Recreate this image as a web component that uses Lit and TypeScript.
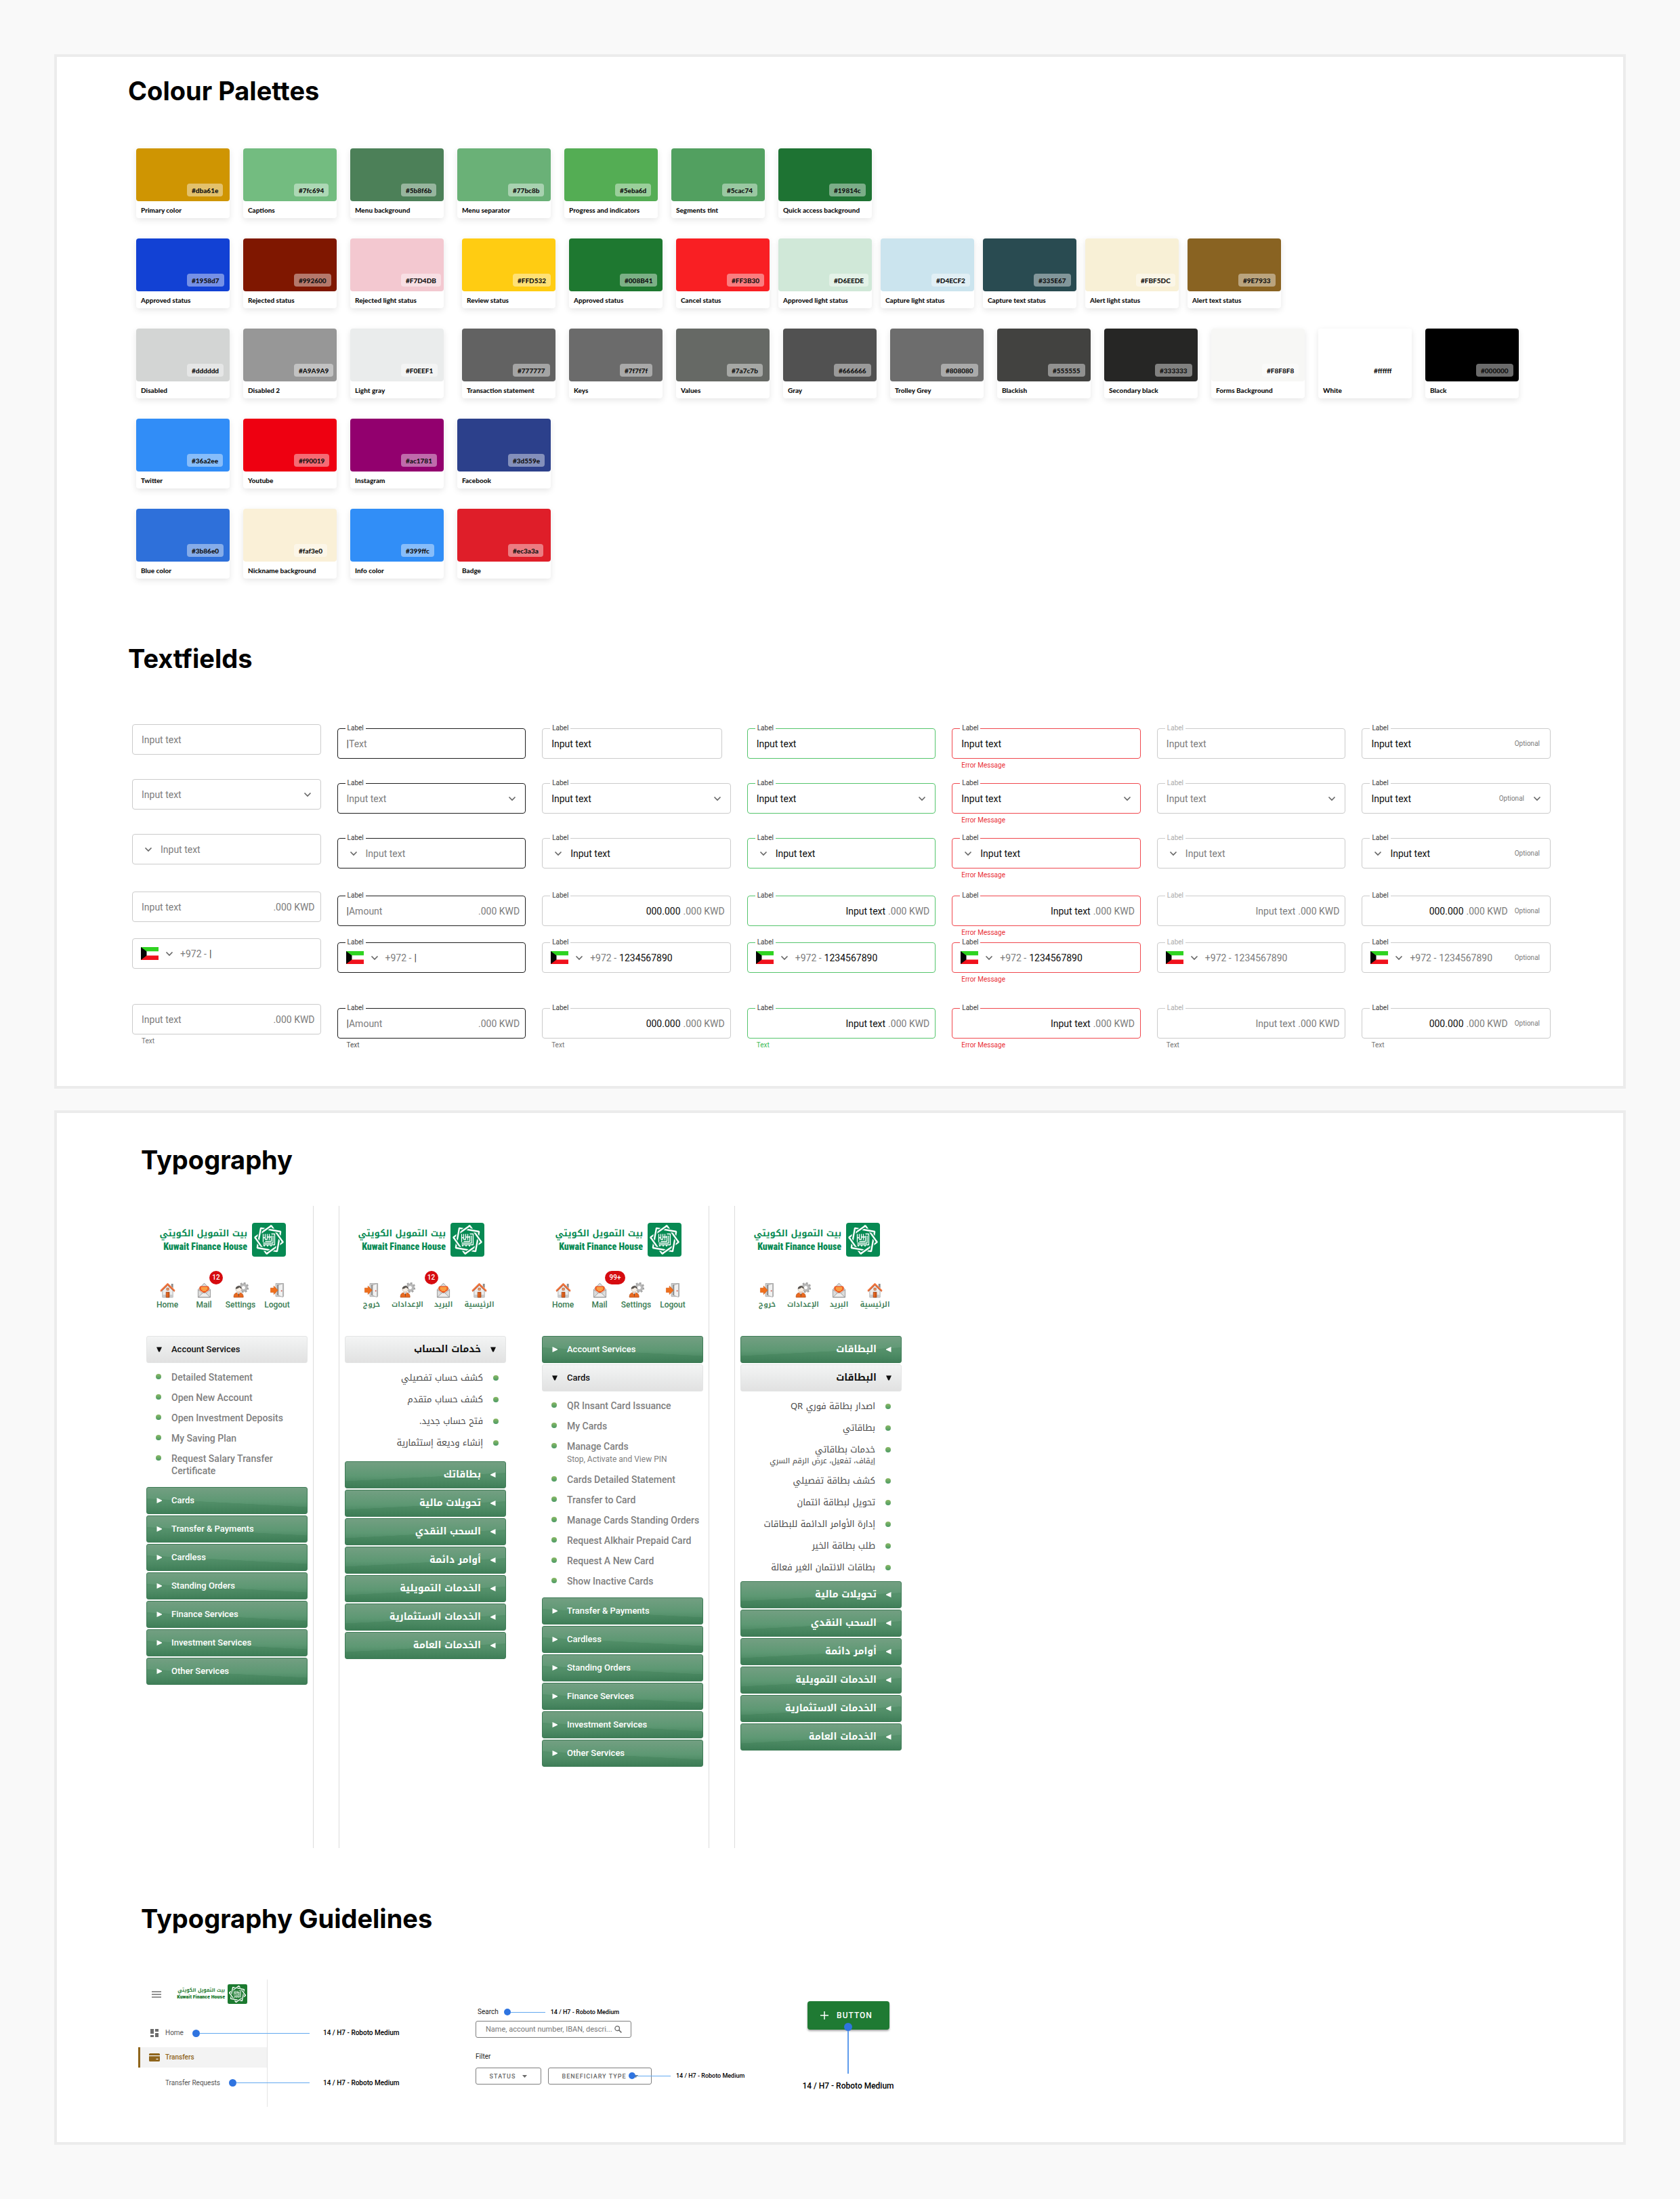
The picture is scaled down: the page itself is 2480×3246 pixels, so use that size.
import { LitElement, html, css, nothing } from "lit";
import { customElement, property } from "lit/decorators.js";
import { classMap } from "lit/directives/class-map.js";

type FieldState = "empty" | "focus" | "filled" | "valid" | "error" | "disabled" | "optional";
type FieldKind = "text" | "select" | "lead" | "amount" | "phone";

interface SwatchData {
  name: string;
  hex: string;
  fill: string;
}

interface MenuEntry {
  title: string;
  items?: { text: string; sub?: string }[];
}

interface MenuData {
  rtl: boolean;
  roomy?: boolean;
  badge?: string;
  entries: MenuEntry[];
}

const s = (name: string, hex: string, fill: string): SwatchData => ({ name, hex, fill });

/* Each row of the palette is a list of groups; the groups are spaced apart. */
const PALETTE: { tight?: boolean; swatches: SwatchData[] }[][] = [
  [
    {
      swatches: [
        s("Primary color", "#dba61e", "#cf9502"),
        s("Captions", "#7fc694", "#73bc80"),
        s("Menu background", "#5b8f6b", "#4c8058"),
        s("Menu separator", "#77bc8b", "#6ab177"),
        s("Progress and indicators", "#5eba6d", "#54ad54"),
        s("Segments tint", "#5cac74", "#52a060"),
        s("Quick access background", "#19814c", "#1e7333"),
      ],
    },
  ],
  [
    {
      swatches: [
        s("Approved status", "#1958d7", "#1241d4"),
        s("Rejected status", "#992600", "#7f1700"),
        s("Rejected light status", "#F7D4DB", "#f3c8d0"),
      ],
    },
    {
      swatches: [
        s("Review status", "#FFD532", "#ffcc12"),
        s("Approved status", "#008B41", "#1e7830"),
        s("Cancel status", "#FF3B30", "#f91f23"),
      ],
    },
    {
      tight: true,
      swatches: [
        s("Approved light status", "#D6EEDE", "#d0e8d8"),
        s("Capture light status", "#D4ECF2", "#cbe4ee"),
        s("Capture text status", "#335E67", "#294b51"),
        s("Alert light status", "#FBF5DC", "#f8f0d6"),
        s("Alert text status", "#9E7933", "#896322"),
      ],
    },
  ],
  [
    {
      swatches: [
        s("Disabled", "#dddddd", "#d3d5d4"),
        s("Disabled 2", "#A9A9A9", "#979797"),
        s("Light gray", "#F0EEF1", "#eaecec"),
      ],
    },
    {
      swatches: [
        s("Transaction statement", "#777777", "#626262"),
        s("Keys", "#7f7f7f", "#6b6b6b"),
        s("Values", "#7a7c7b", "#666965"),
        s("Gray", "#666666", "#515151"),
        s("Trolley Grey", "#808080", "#6d6d6d"),
        s("Blackish", "#555555", "#424240"),
        s("Secondary black", "#333333", "#262625"),
        s("Forms Background", "#F8F8F8", "#f7f7f5"),
        s("White", "#ffffff", "#ffffff"),
        s("Black", "#000000", "#000000"),
      ],
    },
  ],
  [
    {
      swatches: [
        s("Twitter", "#36a2ee", "#318df7"),
        s("Youtube", "#f90019", "#ee0011"),
        s("Instagram", "#ac1781", "#92006e"),
        s("Facebook", "#3d559e", "#2c408b"),
      ],
    },
  ],
  [
    {
      swatches: [
        s("Blue color", "#3b86e0", "#2e70da"),
        s("Nickname background", "#faf3e0", "#faf0d7"),
        s("Info color", "#399ffc", "#318ef7"),
        s("Badge", "#ec3a3a", "#df1e29"),
      ],
    },
  ],
];

const STATES: FieldState[] = ["empty", "focus", "filled", "valid", "error", "disabled", "optional"];

const FIELD_ROWS: { kind: FieldKind; note: boolean; space: string }[] = [
  { kind: "text", note: false, space: "regular" },
  { kind: "select", note: false, space: "regular" },
  { kind: "lead", note: false, space: "wide" },
  { kind: "amount", note: false, space: "none" },
  { kind: "phone", note: false, space: "apart" },
  { kind: "amount", note: true, space: "none" },
];

const MENUS: MenuData[] = [
  {
    rtl: false,
    badge: "12",
    entries: [
      {
        title: "Account Services",
        items: [
          { text: "Detailed Statement" },
          { text: "Open New Account" },
          { text: "Open Investment Deposits" },
          { text: "My Saving Plan" },
          { text: "Request Salary Transfer Certificate" },
        ],
      },
      { title: "Cards" },
      { title: "Transfer & Payments" },
      { title: "Cardless" },
      { title: "Standing Orders" },
      { title: "Finance Services" },
      { title: "Investment Services" },
      { title: "Other Services" },
    ],
  },
  {
    rtl: true,
    roomy: true,
    badge: "12",
    entries: [
      {
        title: "خدمات الحساب",
        items: [
          { text: "كشف حساب تفصيلي" },
          { text: "كشف حساب متقدم" },
          { text: "فتح حساب جديد." },
          { text: "إنشاء وديعة إستثمارية" },
        ],
      },
      { title: "بطاقاتك" },
      { title: "تحويلات مالية" },
      { title: "السحب النقدي" },
      { title: "أوامر دائمة" },
      { title: "الخدمات التمويلية" },
      { title: "الخدمات الاستثمارية" },
      { title: "الخدمات العامة" },
    ],
  },
  {
    rtl: false,
    badge: "99+",
    entries: [
      { title: "Account Services" },
      {
        title: "Cards",
        items: [
          { text: "QR Insant Card Issuance" },
          { text: "My Cards" },
          { text: "Manage Cards", sub: "Stop, Activate and View PIN" },
          { text: "Cards Detailed Statement" },
          { text: "Transfer to Card" },
          { text: "Manage Cards Standing Orders" },
          { text: "Request Alkhair Prepaid Card" },
          { text: "Request A New Card" },
          { text: "Show Inactive Cards" },
        ],
      },
      { title: "Transfer & Payments" },
      { title: "Cardless" },
      { title: "Standing Orders" },
      { title: "Finance Services" },
      { title: "Investment Services" },
      { title: "Other Services" },
    ],
  },
  {
    rtl: true,
    entries: [
      { title: "البطاقات" },
      {
        title: "البطاقات",
        items: [
          { text: "اصدار بطاقة فوري QR" },
          { text: "بطاقاتي" },
          { text: "خدمات بطاقاتي", sub: "إيقاف، تفعيل، عرض الرقم السري" },
          { text: "كشف بطاقة تفصيلي" },
          { text: "تحويل لبطاقة ائتمان" },
          { text: "إدارة الأوامر الدائمة للبطاقات" },
          { text: "طلب بطاقة الخير" },
          { text: "بطاقات الائتمان الغير فعالة" },
        ],
      },
      { title: "تحويلات مالية" },
      { title: "السحب النقدي" },
      { title: "أوامر دائمة" },
      { title: "الخدمات التمويلية" },
      { title: "الخدمات الاستثمارية" },
      { title: "الخدمات العامة" },
    ],
  },
];

const chevron = html`<svg class="chevron" viewBox="0 0 12 8" aria-hidden="true">
  <path d="M1.5 1.5 6 6l4.5-4.5" fill="none" stroke="#666" stroke-width="1.6" />
</svg>`;

const flag = html`<svg class="flag" viewBox="0 0 26 19" aria-hidden="true">
  <path d="M0 0h26v6.5H0z" fill="#2fd321" />
  <path d="M0 6.5h26v6H0z" fill="#fff" />
  <path d="M0 12.5h26V19H0z" fill="#f0121c" />
  <path d="M0 0 8.5 6.5v6L0 19z" fill="#050505" />
</svg>`;

const ICONS = {
  home: html`<svg viewBox="0 0 24 24" aria-hidden="true">
    <path d="M17.5 2.2h3v6.6l-3-2.8z" fill="#8b8b8b" />
    <path d="M4 12.5 12 4.6l8 7.9V23H4z" fill="#ececec" stroke="#9a9a9a" stroke-width=".8" />
    <path d="M4 19h16v4H4z" fill="#c9c9c9" />
    <path d="M1.2 13.2 12 2.4l10.8 10.8" fill="none" stroke="#f0743c" stroke-width="2.6" stroke-linejoin="round" />
    <path d="M1.2 14.6 12 4.2l10.8 10.4" fill="none" stroke="#b5441b" stroke-width=".7" />
    <path d="M9.6 15h5v8h-5z" fill="#e8651e" stroke="#9c4317" stroke-width=".8" />
    <path d="M12.9 15v8" stroke="#b04a14" stroke-width=".8" />
    <path d="M10.4 8.7h3.4v3.2h-3.4z" fill="#f4a06f" stroke="#b5592c" stroke-width=".8" />
  </svg>`,
  mail: html`<svg viewBox="0 0 24 24" aria-hidden="true">
    <path d="M2.5 11 12 1.2 21.5 11v12h-19z" fill="#dcdcdc" stroke="#8e8e8e" stroke-width=".9" stroke-linejoin="round" />
    <path d="M5.2 6.2h13.6v8L12 18.6l-6.8-4.4z" fill="#f4f4f4" />
    <path d="M4.6 7.4 6 5.8h12l1.4 1.6v4.4L12 17l-7.4-5.2z" fill="#ee5a22" />
    <path d="M7 8.2h10M7 10.3h10M9 12.4h6" stroke="#ffc85a" stroke-width="1.1" />
    <path d="m2.8 11.4 7 5.6M21.2 11.4l-7 5.6" stroke="#9b9b9b" stroke-width=".9" fill="none" />
    <path d="m2.8 22.7 7-6.6h4.4l7 6.6z" fill="#ececec" stroke="#8e8e8e" stroke-width=".8" />
  </svg>`,
  settings: html`<svg viewBox="0 0 24 24" aria-hidden="true">
    <circle cx="16.2" cy="8" r="7" fill="none" stroke="#a6a6a6" stroke-width="2.4" stroke-dasharray="3 2.5" />
    <circle cx="16.2" cy="8" r="4.4" fill="none" stroke="#b9b9b9" stroke-width="3.6" />
    <circle cx="16.2" cy="8" r="6" fill="none" stroke="#8f8f8f" stroke-width=".5" />
    <circle cx="8.6" cy="10.6" r="4.4" fill="#f8efe4" stroke="#b8aca0" stroke-width=".6" />
    <path d="M4 10.2C3.8 7 6 5.4 8.8 5.4s4.6 1.8 4.4 4.4c-1.5-.6-2.6-1.2-3.4-2.2-1.4 1.6-3.4 2.4-5.8 2.6z" fill="#57524d" />
    <path d="M1.2 23c-.4-5 2.2-7.4 7.2-7.4s7.8 2.4 7.4 7.4z" fill="#e9691f" stroke="#a74a16" stroke-width=".7" />
    <path d="m6.2 15.7 2.3 3.3 2.3-3.3z" fill="#fff" />
    <path d="m8 17 .6 5.6.7-5.6z" fill="#333" />
  </svg>`,
  logout: html`<svg viewBox="0 0 24 24" aria-hidden="true">
    <path d="M9.5 1.6h12v20h-12z" fill="#d4d4d4" stroke="#9a9a9a" stroke-width=".8" />
    <path d="M11.5 3.4h3v16.4h-3z" fill="#8e8e8e" />
    <path d="m13.6 4.2 6.8-2.4v20.8l-6.8-2.4z" fill="#f1f1f1" stroke="#a2a2a2" stroke-width=".8" />
    <circle cx="18.4" cy="13" r="1" fill="#c9554a" />
    <path d="M1.5 8.6h5V5.4l6.2 6.6-6.2 6.6v-3.2h-5z" fill="#ef6f1c" stroke="#cf5510" stroke-width=".6" />
  </svg>`,
};

const sharedReset = css`
  *,
  *::before {
    box-sizing: border-box;
  }
  button,
  input,
  select {
    font: inherit;
    color: inherit;
    background: none;
    border: 0;
    padding: 0;
    margin: 0;
    border-radius: 0;
    outline: 0;
  }
  a {
    color: inherit;
    text-decoration: none;
  }
  ul {
    list-style: none;
    margin: 0;
    padding: 0;
  }
`;

@customElement("color-swatch")
export class ColorSwatch extends LitElement {
  @property() name = "";
  @property() hex = "";
  @property() fill = "";

  static styles = [
    sharedReset,
    css`
      :host {
        display: block;
        width: 138px;
        flex: none;
        border-radius: 4px;
        background: #fff;
        box-shadow: 0 3px 10px rgba(0, 0, 0, 0.1);
        font: 900 10px/16px Lato, sans-serif;
        color: #111;
      }
      .tone {
        height: 78px;
        border-radius: 4px;
        padding: 52px 0 0 75px;
      }
      .hex {
        display: inline-block;
        height: 19px;
        padding: 0 7px;
        border-radius: 4px;
        line-height: 20px;
        background: rgba(255, 255, 255, 0.42);
      }
      .name {
        height: 25px;
        padding: 5px 7px 0;
        white-space: nowrap;
      }
    `,
  ];

  render() {
    return html`
      <div class="tone" style="background:${this.fill}"><span class="hex">${this.hex}</span></div>
      <div class="name">${this.name}</div>
    `;
  }
}

@customElement("form-field")
export class FormField extends LitElement {
  @property() kind: FieldKind = "text";
  @property() state: FieldState = "empty";
  @property({ type: Boolean }) note = false;

  static styles = [
    sharedReset,
    css`
      :host {
        display: block;
        font: 400 14px/20px Roboto, sans-serif;
        color: #0c0c0c;
        --line: #cbcbcb;
        --tag: #3a3a3a;
        --hint: #747474;
      }
      .field {
        position: relative;
      }
      .labelled {
        padding-top: 6px;
      }
      .short {
        margin-right: 13px;
      }
      .focus {
        --line: #1e1e1e;
        --hint: #555;
      }
      .valid {
        --line: #55c56c;
        --hint: #3dba56;
      }
      .error {
        --line: #f0474d;
        --hint: #e92f37;
      }
      .disabled {
        --tag: #ababab;
      }
      .empty,
      .focus,
      .disabled {
        color: #7c7c7c;
      }
      .tag {
        position: absolute;
        top: 0;
        left: 12px;
        padding: 0 3px;
        background: #fff;
        font-size: 10px;
        line-height: 12px;
        color: var(--tag);
      }
      .box {
        display: flex;
        align-items: center;
        height: 45px;
        padding: 0 8px 0 13px;
        border: 1px solid var(--line);
        border-radius: 4px;
      }
      .box input,
      .box select {
        flex: 1;
        width: 100%;
        min-width: 0;
        height: 24px;
        appearance: none;
        opacity: 1;
      }
      .box input::placeholder {
        color: #7c7c7c;
        opacity: 1;
      }
      .right {
        text-align: right;
      }
      .muted {
        color: #7c7c7c;
        white-space: pre;
      }
      .suffix {
        margin-left: 4px;
      }
      .prefix {
        margin-right: 4px;
      }
      .chevron {
        width: 12px;
        height: 8px;
        margin: 0 5px 0 3px;
        flex: none;
      }
      .lead .chevron {
        margin: 0 12px 0 4px;
      }
      .caret {
        color: #333;
      }
      .optional-tag {
        margin: 0 7px 0 10px;
        font-size: 10px;
        color: #7c7c7c;
      }
      .select .optional-tag {
        margin-right: 10px;
      }
      .country {
        display: flex;
        align-items: center;
        margin-right: 10px;
      }
      .country .chevron {
        margin: 0 0 0 10px;
      }
      .phone .box {
        padding-left: 12px;
      }
      .flag {
        width: 26px;
        height: 19px;
      }
      .hint {
        min-height: 16px;
        margin: 2px 0 0 14px;
        font-size: 10px;
        line-height: 16px;
        color: var(--hint);
      }
    `,
  ];

  private get value(): string {
    if (this.state === "empty" || this.state === "focus") return "";
    if (this.kind === "phone") return "1234567890";
    if (this.kind === "amount" && (this.state === "filled" || this.state === "optional")) return "000.000";
    return "Input text";
  }

  private get placeholder(): string {
    if (this.kind === "phone") return "";
    if (this.state !== "focus") return "Input text";
    return this.kind === "text" ? "Text" : this.kind === "amount" ? "Amount" : "Input text";
  }

  private get hint(): string {
    if (this.state === "error") return "Error Message";
    return this.note ? "Text" : "";
  }

  private control() {
    const off = this.state === "disabled";
    if (this.kind === "select" || this.kind === "lead") {
      return html`<select id="control" aria-label="Input text" ?disabled=${off}>
        <option>Input text</option>
      </select>`;
    }
    const muted = off || (this.kind === "phone" && this.state === "optional");
    return html`<input
      id="control"
      aria-label=${this.placeholder || "Phone number"}
      class=${classMap({ right: this.kind === "amount" && this.value !== "", muted })}
      type=${this.kind === "phone" ? "tel" : "text"}
      .value=${this.value}
      placeholder=${this.placeholder}
      ?disabled=${off}
    />`;
  }

  render() {
    const { kind, state } = this;
    const labelled = state !== "empty";
    const typing = (state === "focus" && (kind === "text" || kind === "amount")) || (kind === "phone" && this.value === "");
    return html`
      <div
        class=${classMap({
          field: true,
          labelled,
          short: kind === "text" && state === "filled",
          [state]: true,
          [kind]: true,
        })}
      >
        ${labelled ? html`<label class="tag" for="control">Label</label>` : nothing}
        <div class="box">
          ${kind === "lead" ? chevron : nothing}
          ${kind === "phone"
            ? html`<button class="country" type="button" aria-label="Country">${flag}${chevron}</button>
                <span class="muted prefix">+972 -</span>`
            : nothing}
          ${typing ? html`<span class="caret">|</span>` : nothing} ${this.control()}
          ${kind === "amount" ? html`<span class="muted suffix">.000 KWD</span>` : nothing}
          ${state === "optional" ? html`<span class="optional-tag">Optional</span>` : nothing}
          ${kind === "select" ? chevron : nothing}
        </div>
        <div class="hint">${this.hint}</div>
      </div>
    `;
  }
}

@customElement("brand-logo")
export class BrandLogo extends LitElement {
  @property({ type: Boolean, reflect: true }) small = false;

  static styles = [
    sharedReset,
    css`
      :host {
        display: flex;
        align-items: center;
        gap: 7px;
        direction: ltr;
        color: #078a53;
      }
      .words {
        width: 126px;
        white-space: nowrap;
        text-align: right;
      }
      .ar {
        font: 700 13px/20px "Noto Kufi Arabic", "DejaVu Sans", sans-serif;
        direction: rtl;
      }
      .en {
        font: 900 14px/18px "Roboto Condensed", Roboto, sans-serif;
      }
      .mark {
        width: 50px;
        height: 50px;
        flex: none;
      }
      :host([small]) {
        gap: 4px;
        color: #1c7a30;
      }
      :host([small]) .words {
        width: 73px;
      }
      :host([small]) .ar {
        font-size: 7px;
        line-height: 10px;
      }
      :host([small]) .en {
        font-size: 8px;
        line-height: 10px;
      }
      :host([small]) .mark {
        width: 29px;
        height: 29px;
      }
    `,
  ];

  render() {
    return html`
      <div class="words">
        <div class="ar" lang="ar">بيت التمويل الكويتي</div>
        <div class="en">Kuwait Finance House</div>
      </div>
      <svg class="mark" viewBox="0 0 50 50" role="img" aria-label="Kuwait Finance House">
        <rect width="50" height="50" rx="4" fill="currentColor" />
        <g fill="none" stroke-linejoin="bevel">
          <path d="M28.6 4.3 45.7 28.6 21.4 45.7 4.3 21.4z" stroke="#fff" stroke-width="2.3" />
          <path d="M42.2 13 37 42.2 7.8 37 13 7.8z" stroke="currentColor" stroke-width="5" />
          <path d="M42.2 13 37 42.2 7.8 37 13 7.8z" stroke="#fff" stroke-width="2.3" />
          <path
            d="m37.2 16.5 7 10M33.500 37.200l-10 7M12.800 33.500l-7-10M16.500 12.800l10-7"
            stroke="currentColor"
            stroke-width="5"
          />
          <path
            d="m37.2 16.5 8.500 12.100M33.500 37.200l-12.100 8.500M12.800 33.500 4.300 21.400M16.500 12.800 28.600 4.300"
            stroke="#fff"
            stroke-width="2.3"
          />
          <g stroke="#fff" stroke-width="1.3">
            <path d="M16.500 16.500v12M19.500 16.500v8h3v-8M25.500 16.500v9M28.500 16.500h5v16h-17" />
            <path d="M31 19v11H16.500M28.500 19v8.500h-9M16.500 22h3M22.500 21h6" />
            <path d="M17 34h2M22 34h2M27 34h2" />
          </g>
        </g>
      </svg>
    `;
  }
}

@customElement("side-menu")
export class SideMenu extends LitElement {
  @property({ attribute: false }) menu!: MenuData;

  static styles = [
    sharedReset,
    css`
      :host {
        display: block;
        width: 255px;
        flex: none;
      }
      .phone {
        height: 100%;
        padding: 25px 8px 0;
        border-right: 1px solid #dcdcdc;
        font: 500 14px/18px Roboto, sans-serif;
      }
      .phone.rtl {
        border-right: 0;
        border-left: 1px solid #dcdcdc;
        font-family: "Noto Kufi Arabic", "DejaVu Sans", sans-serif;
      }
      brand-logo {
        margin-left: 23px;
      }
      .shortcuts {
        display: grid;
        grid-template-columns: repeat(4, 54px);
        margin: 38px 0 38px 4px;
      }
      .rtl .shortcuts {
        grid-template-columns: repeat(4, 53px);
        margin: 38px 13px 38px 0;
      }
      .shortcuts a {
        position: relative;
        display: flex;
        flex-direction: column;
        align-items: center;
        gap: 2px;
        font-size: 12px;
        line-height: 16px;
        color: #3c7d54;
        white-space: nowrap;
      }
      .rtl .shortcuts a {
        font-size: 11px;
        font-weight: 600;
      }
      .shortcuts svg {
        width: 23px;
        height: 23px;
      }
      .badge {
        position: absolute;
        top: -17px;
        inset-inline-start: calc(50% + 8px);
        min-width: 20px;
        height: 20px;
        padding: 0 4px;
        border-radius: 10px;
        background: #d60b0f;
        color: #fff;
        font: 500 10px/20px Roboto, sans-serif;
        text-align: center;
      }
      .badge.long {
        min-width: 30px;
      }
      .entries {
        display: flex;
        flex-direction: column;
        gap: 2px;
      }
      .bar {
        display: flex;
        align-items: center;
        gap: 14px;
        width: 100%;
        height: 40px;
        padding: 0 14px;
        border: 1px solid #3f7c57;
        border-radius: 3px;
        background: linear-gradient(183deg, transparent 56%, rgba(42, 110, 66, 0.22) 57%, transparent 100%),
          linear-gradient(#739f82, #5d9873 55%, #3f7e58);
        color: #fff;
        font-size: 13px;
        text-align: start;
      }
      .rtl .bar {
        background: linear-gradient(177deg, transparent 56%, rgba(42, 110, 66, 0.22) 57%, transparent 100%),
          linear-gradient(#739f82, #5d9873 55%, #3f7e58);
        font-size: 14px;
        font-weight: 700;
      }
      .bar.open,
      .rtl .bar.open {
        border-color: #e4e5e5;
        background: linear-gradient(#f3f4f4, #e9eaea 55%, #e1e1e1);
        color: #111;
      }
      .arrow {
        width: 8px;
        height: 8px;
        flex: none;
      }
      .rtl .bar:not(.open) .arrow {
        transform: scaleX(-1);
      }
      .items {
        display: flex;
        flex-direction: column;
        gap: 12px;
        padding: 10px 0 13px;
        padding-inline-start: 14px;
        color: #808080;
      }
      .rtl .items {
        padding-bottom: 8px;
        padding-inline-start: 16px;
        font-size: 13px;
        line-height: 20px;
        font-weight: 400;
        color: #484848;
      }
      .rtl.roomy .items {
        padding-bottom: 15px;
        padding-inline-start: 11px;
      }
      .items a {
        display: flex;
        gap: 15px;
      }
      .items a::before {
        content: "";
        flex: none;
        width: 8px;
        height: 8px;
        margin-top: 4px;
        border-radius: 50%;
        background: linear-gradient(#8cb964, #4a9a66);
      }
      .rtl .items a::before {
        margin-top: 6px;
      }
      .sub {
        display: block;
        margin-top: 1px;
        font-size: 12px;
        font-weight: 400;
        white-space: nowrap;
      }
      .rtl .sub {
        margin-top: 0;
        font-size: 11px;
        line-height: 14px;
      }
    `,
  ];

  private entry(e: MenuEntry) {
    const open = !!e.items;
    return html`
      <button class=${classMap({ bar: true, open })} type="button" aria-expanded=${open ? "true" : "false"}>
        <svg class="arrow" viewBox="0 0 8 8" aria-hidden="true">
          <path d=${open ? "M0 .5h8L4.8 7.5H3.2z" : "M.5 0v8L8 4.6V3.4z"} fill="currentColor" />
        </svg>
        <span>${e.title}</span>
      </button>
      ${open
        ? html`<ul class="items">
            ${e.items!.map(
              (i) => html`<li>
                <a href="#"><span>${i.text}${i.sub ? html`<span class="sub">${i.sub}</span>` : nothing}</span></a>
              </li>`,
            )}
          </ul>`
        : nothing}
    `;
  }

  render() {
    const { rtl, roomy, badge, entries } = this.menu;
    const names = rtl ? ["الرئيسية", "البريد", "الإعدادات", "خروج"] : ["Home", "Mail", "Settings", "Logout"];
    const icons = [ICONS.home, ICONS.mail, ICONS.settings, ICONS.logout];
    return html`
      <div class=${classMap({ phone: true, rtl, roomy: !!roomy })} dir=${rtl ? "rtl" : "ltr"} lang=${rtl ? "ar" : "en"}>
        <brand-logo></brand-logo>
        <nav class="shortcuts">
          ${names.map(
            (n, i) => html`<a href="#">
              ${icons[i]}<span>${n}</span>
              ${i === 1 && badge
                ? html`<span class=${classMap({ badge: true, long: badge.length > 2 })}>${badge}</span>`
                : nothing}
            </a>`,
          )}
        </nav>
        <div class="entries">${entries.map((e) => this.entry(e))}</div>
      </div>
    `;
  }
}

@customElement("type-guidelines")
export class TypeGuidelines extends LitElement {
  static styles = [
    sharedReset,
    css`
      :host {
        display: flex;
        align-items: flex-start;
        font: 400 10px/16px Roboto, sans-serif;
        color: #222;
      }
      .spec {
        font-weight: 500;
        color: #000;
        white-space: nowrap;
      }
      .spec.narrow {
        font-size: 9px;
      }
      .spec.large {
        font-size: 12px;
      }
      .dot {
        flex: none;
        width: 11px;
        height: 11px;
        border-radius: 50%;
        background: #2f74e0;
      }
      .wire {
        flex: 1;
        height: 1px;
        background: #62a9f0;
      }
      .drawer-zone {
        width: 385px;
        margin-right: 113px;
      }
      .drawer {
        width: 191px;
        height: 188px;
        border-right: 1px solid #e4e4e4;
      }
      .top {
        display: flex;
        align-items: center;
        gap: 21px;
        height: 58px;
        padding: 0 0 16px 20px;
      }
      .burger {
        width: 14px;
        height: 14px;
      }
      .burger svg {
        display: block;
      }
      .row {
        display: flex;
        align-items: center;
        width: 385px;
        height: 42px;
        color: #555;
      }
      .row a {
        display: flex;
        align-items: center;
        padding-left: 16px;
      }
      .row svg,
      .row .blank {
        width: 16px;
        height: 16px;
        margin-right: 8px;
      }
      .row .dot {
        margin-left: 13px;
      }
      .row .spec {
        width: 112px;
        margin-left: 20px;
      }
      .row.active {
        width: 190px;
        height: 30px;
        border-left: 3px solid #8f651c;
        background: #f3f3f3;
        color: #8f651c;
        font-weight: 500;
      }
      .row.active a {
        padding-left: 13px;
      }
      .row.last {
        height: 45px;
      }
      .filters {
        width: 400px;
        margin-right: 84px;
        padding-top: 40px;
      }
      .caption {
        display: flex;
        align-items: center;
        height: 16px;
        padding-left: 3px;
      }
      .caption .dot {
        width: 10px;
        height: 10px;
        margin-left: 8px;
      }
      .caption .wire {
        flex: none;
        width: 51px;
        margin-right: 8px;
      }
      .search {
        display: flex;
        align-items: center;
        width: 230px;
        height: 25px;
        margin: 5px 0 20px;
        padding: 0 13px 0 14px;
        border: 1px solid #7e7e7e;
        border-radius: 3px;
      }
      .search input {
        flex: 1;
        min-width: 0;
        font-size: 11px;
      }
      .search input::placeholder {
        color: #777;
        opacity: 1;
      }
      .search svg {
        width: 11px;
        height: 11px;
      }
      .chips {
        display: flex;
        gap: 10px;
        margin-top: 8px;
        position: relative;
      }
      .chip {
        display: flex;
        align-items: center;
        justify-content: center;
        gap: 10px;
        width: 97px;
        height: 25px;
        border: 1px solid #7e7e7e;
        border-radius: 3px;
        color: #6a6a6a;
        font-size: 9px;
        font-weight: 500;
        letter-spacing: 1px;
      }
      .chip.wide {
        width: 153px;
      }
      .chip svg {
        width: 7px;
        height: 4px;
      }
      .pointer {
        position: absolute;
        left: 226px;
        top: 4px;
        display: flex;
        align-items: center;
        width: 174px;
        height: 16px;
      }
      .pointer .dot {
        width: 10px;
        height: 10px;
      }
      .pointer .spec {
        width: 104px;
        margin-left: 8px;
      }
      .action {
        display: flex;
        flex-direction: column;
        align-items: center;
        width: 132px;
        padding-top: 32px;
      }
      .primary {
        display: flex;
        align-items: center;
        justify-content: center;
        gap: 12px;
        width: 121px;
        height: 42px;
        padding-right: 5px;
        border-radius: 4px;
        background: #1f7a33;
        box-shadow: 0 2px 3px rgba(0, 0, 0, 0.35);
        color: #fff;
        font-size: 12px;
        font-weight: 500;
        letter-spacing: 1px;
      }
      .primary svg {
        width: 12px;
        height: 12px;
      }
      .drop {
        display: flex;
        flex-direction: column;
        align-items: center;
        height: 75px;
        margin: -10px 0 10px;
        z-index: 1;
      }
      .drop .dot {
        width: 12px;
        height: 12px;
      }
      .drop .wire {
        width: 2px;
        background: #5f9cec;
      }
    `,
  ];

  render() {
    const spec = "14 / H7 - Roboto Medium";
    const caret = html`<svg viewBox="0 0 7 4" aria-hidden="true"><path d="M0 0h7L3.5 4z" fill="#6a6a6a" /></svg>`;
    return html`
      <div class="drawer-zone">
        <div class="drawer">
          <div class="top">
            <button class="burger" type="button" aria-label="Menu">
              <svg viewBox="0 0 14 14" aria-hidden="true">
                <path d="M0 4h14M0 8h14M0 12h14" stroke="#707070" stroke-width="1.5" />
              </svg>
            </button>
            <brand-logo small></brand-logo>
          </div>
          <div class="row">
            <a href="#">
              <svg viewBox="0 0 16 16" aria-hidden="true">
                <path d="M2 2h5v7H2zM9 2h5v4H9zM2 11h5v3H2zM9 8h5v6H9z" fill="#6c6c6c" />
              </svg>
              Home
            </a>
            <span class="dot"></span><span class="wire"></span><span class="spec">${spec}</span>
          </div>
          <div class="row active">
            <a href="#">
              <svg viewBox="0 0 16 16" aria-hidden="true">
                <path
                  d="M1.5 2h13A1.5 1.5 0 0 1 16 3.5V5H0V3.5A1.5 1.5 0 0 1 1.5 2zM0 6.2h16v6.3a1.5 1.5 0 0 1-1.5 1.5h-13A1.5 1.5 0 0 1 0 12.5z"
                  fill="#8f651c"
                />
                <path d="M10.5 10.5h3" stroke="#fff" stroke-width="1.2" />
              </svg>
              Transfers
            </a>
          </div>
          <div class="row last">
            <a href="#"><span class="blank"></span>Transfer Requests</a>
            <span class="dot"></span><span class="wire"></span><span class="spec">${spec}</span>
          </div>
        </div>
      </div>
      <div class="filters">
        <div class="caption">
          <label for="search">Search</label>
          <span class="dot"></span><span class="wire"></span><span class="spec narrow">${spec}</span>
        </div>
        <div class="search">
          <input id="search" type="text" placeholder="Name, account number, IBAN, descri..." />
          <svg viewBox="0 0 11 11" aria-hidden="true">
            <circle cx="4.2" cy="4.2" r="3.3" fill="none" stroke="#666" stroke-width="1.3" />
            <path d="m6.7 6.7 3.7 3.7" stroke="#666" stroke-width="1.5" />
          </svg>
        </div>
        <div>Filter</div>
        <div class="chips">
          <button class="chip" type="button">STATUS ${caret}</button>
          <button class="chip wide" type="button">BENEFICIARY TYPE ${caret}</button>
          <div class="pointer">
            <span class="dot"></span><span class="wire"></span><span class="spec narrow">${spec}</span>
          </div>
        </div>
      </div>
      <div class="action">
        <button class="primary" type="button">
          <svg viewBox="0 0 12 12" aria-hidden="true">
            <path d="M6 0v12M0 6h12" stroke="#fff" stroke-width="1.5" />
          </svg>
          BUTTON
        </button>
        <div class="drop"><span class="dot"></span><span class="wire"></span></div>
        <span class="spec large">${spec}</span>
      </div>
    `;
  }
}

@customElement("app-root")
export class AppRoot extends LitElement {
  static styles = [
    sharedReset,
    css`
      :host {
        display: block;
        min-height: 100vh;
        box-sizing: border-box;
        padding: 80px;
        background: #f9f9f9;
      }
      main {
        display: flex;
        flex-direction: column;
        gap: 32px;
      }
      .panel {
        border: 4px solid #ececec;
        background: #fff;
        padding: 26px 107px 52px 105px;
      }
      .panel.second {
        padding: 45px 108px 52px 124px;
      }
      h2 {
        margin: 0;
        font: 700 38px/48px Inter, sans-serif;
        color: #000;
      }
      .palette {
        display: flex;
        flex-direction: column;
        gap: 30px;
        margin: 61px 0 94px 12px;
      }
      .tones,
      .group {
        display: flex;
        gap: 20px;
      }
      .group:nth-child(2) {
        margin-left: 7px;
      }
      .group.tight {
        gap: 13px;
        margin-left: -7px;
      }
      .fields {
        margin: 73px 0 0 6px;
      }
      .line {
        display: grid;
        grid-template-columns: repeat(7, minmax(0, 1fr));
        gap: 24px;
      }
      .regular {
        margin-bottom: 12px;
      }
      .wide {
        margin-bottom: 16px;
      }
      .apart {
        margin-bottom: 28px;
      }
      .menus {
        display: flex;
        gap: 37px;
        min-height: 948px;
        margin: 44px 0 80px;
      }
      type-guidelines {
        margin: 66px 0 0 -4px;
      }
    `,
  ];

  render() {
    return html`
      <main>
        <section class="panel">
          <h2>Colour Palettes</h2>
          <div class="palette">
            ${PALETTE.map(
              (row) => html`<div class="tones">
                ${row.map(
                  (g) => html`<div class=${classMap({ group: true, tight: !!g.tight })}>
                    ${g.swatches.map(
                      (c) => html`<color-swatch .name=${c.name} .hex=${c.hex} .fill=${c.fill}></color-swatch>`,
                    )}
                  </div>`,
                )}
              </div>`,
            )}
          </div>
          <h2>Textfields</h2>
          <div class="fields">
            ${FIELD_ROWS.map(
              (r) => html`<div class="line ${r.space}">
                ${STATES.map(
                  (st) => html`<form-field .kind=${r.kind} .state=${st} .note=${r.note}></form-field>`,
                )}
              </div>`,
            )}
          </div>
        </section>
        <section class="panel second">
          <h2>Typography</h2>
          <div class="menus">${MENUS.map((m) => html`<side-menu .menu=${m}></side-menu>`)}</div>
          <h2>Typography Guidelines</h2>
          <type-guidelines></type-guidelines>
        </section>
      </main>
    `;
  }
}
